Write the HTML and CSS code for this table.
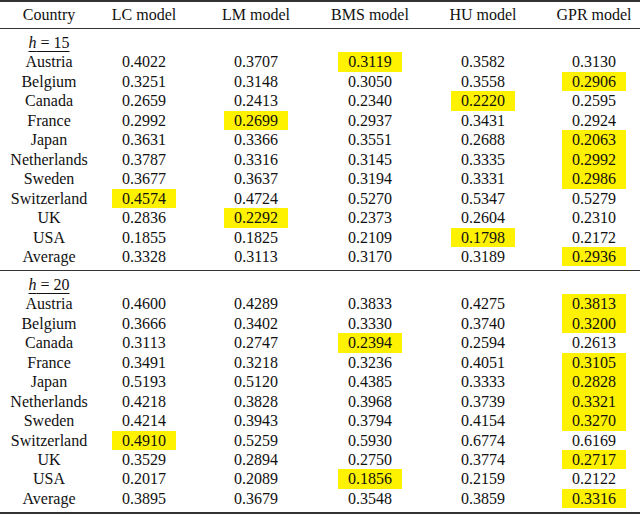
FILE: index.html
```html
<!DOCTYPE html>
<html>
<head>
<meta charset="utf-8">
<link rel="stylesheet" href="styles.css">
</head>
<body>
<table class="results">
  <colgroup>
    <col class="c1"><col class="c2"><col class="c3"><col class="c4"><col class="c5"><col class="c6">
  </colgroup>
  <thead>
    <tr><th>Country</th><th>LC model</th><th>LM model</th><th>BMS model</th><th>HU model</th><th>GPR model</th></tr>
  </thead>
  <tbody>
    <tr class="label"><td><span class="h"><i>h</i> = 15</span></td><td></td><td></td><td></td><td></td><td></td></tr>
    <tr><td>Austria</td><td>0.4022</td><td>0.3707</td><td><span class="hl">0.3119</span></td><td>0.3582</td><td>0.3130</td></tr>
    <tr><td>Belgium</td><td>0.3251</td><td>0.3148</td><td>0.3050</td><td>0.3558</td><td><span class="hl">0.2906</span></td></tr>
    <tr><td>Canada</td><td>0.2659</td><td>0.2413</td><td>0.2340</td><td><span class="hl">0.2220</span></td><td>0.2595</td></tr>
    <tr><td>France</td><td>0.2992</td><td><span class="hl">0.2699</span></td><td>0.2937</td><td>0.3431</td><td>0.2924</td></tr>
    <tr><td>Japan</td><td>0.3631</td><td>0.3366</td><td>0.3551</td><td>0.2688</td><td><span class="hl">0.2063</span></td></tr>
    <tr><td>Netherlands</td><td>0.3787</td><td>0.3316</td><td>0.3145</td><td>0.3335</td><td><span class="hl">0.2992</span></td></tr>
    <tr><td>Sweden</td><td>0.3677</td><td>0.3637</td><td>0.3194</td><td>0.3331</td><td><span class="hl">0.2986</span></td></tr>
    <tr><td>Switzerland</td><td><span class="hl">0.4574</span></td><td>0.4724</td><td>0.5270</td><td>0.5347</td><td>0.5279</td></tr>
    <tr><td>UK</td><td>0.2836</td><td><span class="hl">0.2292</span></td><td>0.2373</td><td>0.2604</td><td>0.2310</td></tr>
    <tr><td>USA</td><td>0.1855</td><td>0.1825</td><td>0.2109</td><td><span class="hl">0.1798</span></td><td>0.2172</td></tr>
    <tr class="last"><td>Average</td><td>0.3328</td><td>0.3113</td><td>0.3170</td><td>0.3189</td><td><span class="hl">0.2936</span></td></tr>
  </tbody>
  <tbody class="sec">
    <tr class="label"><td><span class="h"><i>h</i> = 20</span></td><td></td><td></td><td></td><td></td><td></td></tr>
    <tr><td>Austria</td><td>0.4600</td><td>0.4289</td><td>0.3833</td><td>0.4275</td><td><span class="hl">0.3813</span></td></tr>
    <tr><td>Belgium</td><td>0.3666</td><td>0.3402</td><td>0.3330</td><td>0.3740</td><td><span class="hl">0.3200</span></td></tr>
    <tr><td>Canada</td><td>0.3113</td><td>0.2747</td><td><span class="hl">0.2394</span></td><td>0.2594</td><td>0.2613</td></tr>
    <tr><td>France</td><td>0.3491</td><td>0.3218</td><td>0.3236</td><td>0.4051</td><td><span class="hl">0.3105</span></td></tr>
    <tr><td>Japan</td><td>0.5193</td><td>0.5120</td><td>0.4385</td><td>0.3333</td><td><span class="hl">0.2828</span></td></tr>
    <tr><td>Netherlands</td><td>0.4218</td><td>0.3828</td><td>0.3968</td><td>0.3739</td><td><span class="hl">0.3321</span></td></tr>
    <tr><td>Sweden</td><td>0.4214</td><td>0.3943</td><td>0.3794</td><td>0.4154</td><td><span class="hl">0.3270</span></td></tr>
    <tr><td>Switzerland</td><td><span class="hl">0.4910</span></td><td>0.5259</td><td>0.5930</td><td>0.6774</td><td>0.6169</td></tr>
    <tr><td>UK</td><td>0.3529</td><td>0.2894</td><td>0.2750</td><td>0.3774</td><td><span class="hl">0.2717</span></td></tr>
    <tr><td>USA</td><td>0.2017</td><td>0.2089</td><td><span class="hl">0.1856</span></td><td>0.2159</td><td>0.2122</td></tr>
    <tr class="last"><td>Average</td><td>0.3895</td><td>0.3679</td><td>0.3548</td><td>0.3859</td><td><span class="hl">0.3316</span></td></tr>
  </tbody>
</table>
</body>
</html>
```

FILE: styles.css
```css
html, body {
  margin: 0;
  padding: 0;
  background: #ffffff;
}

body {
  font-family: "Liberation Serif", "Times New Roman", serif;
  font-size: 16px;
  color: #111111;
}

.results {
  width: 640px;
  border-collapse: separate;
  border-spacing: 0;
  table-layout: fixed;
  border-top: 2px solid #333333;
  border-bottom: 2px solid #333333;
}

.c1 { width: 98px; }
.c2 { width: 92px; }
.c3 { width: 132px; }
.c4 { width: 96px; }
.c5 { width: 130px; }
.c6 { width: 92px; }

.results th,
.results td {
  padding: 0;
  text-align: center;
  line-height: 19.45px;
  height: 19.45px;
  font-weight: normal;
  white-space: nowrap;
  vertical-align: middle;
  overflow: hidden;
}

.results th {
  height: 26px;
  box-sizing: border-box;
  padding-top: 3px;
  padding-bottom: 3.55px;
  border-bottom: 1px solid #333333;
}

.results .label td {
  height: 23.45px;
  box-sizing: border-box;
  padding-top: 4px;
  padding-bottom: 0;
}

.results .last td {
  height: 22.95px;
  box-sizing: border-box;
  padding-bottom: 3.5px;
}

.results .sec tr:first-child td {
  height: 24.45px;
  border-top: 1px solid #333333;
}

.h {
  text-decoration: underline;
  text-underline-offset: 3px;
  text-decoration-thickness: 1px;
}

.h i {
  font-style: italic;
}

.hl {
  display: block;
  width: fit-content;
  margin: 0 auto;
  padding: 0 10px;
  background: #fff200;
  line-height: 19.45px;
  height: 19.45px;
}
```
